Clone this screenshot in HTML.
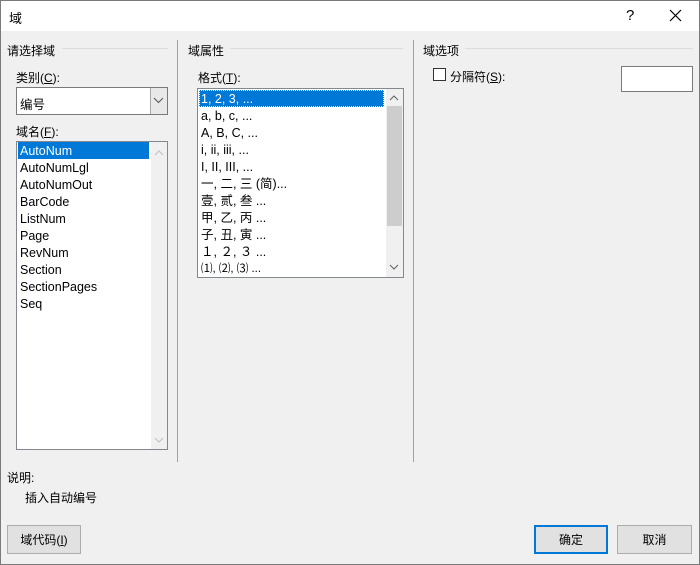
<!DOCTYPE html>
<html><head><meta charset="utf-8"><style>
*{box-sizing:border-box;margin:0;padding:0}
body{width:700px;height:565px;background:#f0f0f0;font-family:"Liberation Sans","Noto Sans CJK SC",sans-serif;font-size:12px;color:#000;position:relative;overflow:hidden}
.frame{position:absolute;left:0;top:0;width:700px;height:565px;border:1px solid #7a7a7a}
.title{position:absolute;left:1px;top:1px;width:698px;height:30px;background:#fff}
.a{position:absolute;white-space:nowrap}
.hr{position:absolute;height:1px;background:#dcdcdc}
.vr{position:absolute;width:1px;background:#a0a0a0}
.box{position:absolute;background:#fff;border:1px solid #828790}
.item{position:absolute;height:17px;line-height:18px;padding-left:2px;white-space:nowrap;font-size:12.5px}
.sel{background:#0078d7;color:#fff}
.btn{position:absolute;height:29px;background:#e1e1e1;border:1px solid #adadad;text-align:center;line-height:28px}
u{text-decoration:underline}
</style></head><body>
<div class="title"></div>
<div class="frame"></div>
<div class="a" style="left:9px;top:8px;font-size:13px">域</div>
<div class="a" style="left:626px;top:7px;font-size:15px">?</div>
<svg class="a" style="left:669px;top:9px" width="13" height="13"><path d="M1 1L12 12M12 1L1 12" stroke="#000" stroke-width="1.2"/></svg>

<div class="a" style="left:7px;top:42px">请选择域</div>
<div class="hr" style="left:62px;top:48px;width:106px"></div>
<div class="vr" style="left:177px;top:40px;height:422px"></div>
<div class="a" style="left:188px;top:42px">域属性</div>
<div class="hr" style="left:230px;top:48px;width:173px"></div>
<div class="vr" style="left:413px;top:40px;height:422px"></div>
<div class="a" style="left:423px;top:42px">域选项</div>
<div class="hr" style="left:465px;top:48px;width:228px"></div>

<div class="a" style="left:16px;top:69px">类别(<u>C</u>):</div>
<div class="box" style="left:16px;top:87px;width:152px;height:28px;border-color:#7a7a7a"></div>
<div class="a" style="left:20px;top:94px;font-size:12.5px">编号</div>
<div class="a" style="left:150px;top:88px;width:17px;height:26px;background:#e8e8e8;border-left:1px solid #aaa"></div>
<svg class="a" style="left:153px;top:97px" width="11" height="7"><path d="M1 1L5.5 5.5L10 1" stroke="#555" fill="none"/></svg>

<div class="a" style="left:16px;top:123px">域名(<u>F</u>):</div>
<div class="box" style="left:16px;top:141px;width:152px;height:309px"></div>
<div class="a" style="left:151px;top:142px;width:16px;height:307px;background:#f0f0f0"></div>
<svg class="a" style="left:154px;top:150px" width="10" height="6"><path d="M1 5L5 1L9 5" stroke="#c0c0c0" fill="none"/></svg>
<svg class="a" style="left:154px;top:437px" width="10" height="6"><path d="M1 1L5 5L9 1" stroke="#c0c0c0" fill="none"/></svg>
<div class="item sel" style="left:18px;top:142px;width:131px">AutoNum</div>
<div class="item" style="left:18px;top:159px">AutoNumLgl</div>
<div class="item" style="left:18px;top:176px">AutoNumOut</div>
<div class="item" style="left:18px;top:193px">BarCode</div>
<div class="item" style="left:18px;top:210px">ListNum</div>
<div class="item" style="left:18px;top:227px">Page</div>
<div class="item" style="left:18px;top:244px">RevNum</div>
<div class="item" style="left:18px;top:261px">Section</div>
<div class="item" style="left:18px;top:278px">SectionPages</div>
<div class="item" style="left:18px;top:295px">Seq</div>

<div class="a" style="left:198px;top:69px">格式(<u>T</u>):</div>
<div class="box" style="left:197px;top:88px;width:207px;height:190px"></div>
<div class="a" style="left:386px;top:89px;width:17px;height:188px;background:#f0f0f0"></div>
<div class="a" style="left:387px;top:106px;width:15px;height:120px;background:#cdcdcd"></div>
<svg class="a" style="left:389px;top:95px" width="10" height="6"><path d="M1 5L5 1L9 5" stroke="#606060" fill="none"/></svg>
<svg class="a" style="left:389px;top:264px" width="10" height="6"><path d="M1 1L5 5L9 1" stroke="#606060" fill="none"/></svg>
<div class="item sel" style="left:199px;top:90px;width:185px;outline:1px dotted #fff;outline-offset:-1px">1, 2, 3, ...</div>
<div class="item" style="left:199px;top:107px">a, b, c, ...</div>
<div class="item" style="left:199px;top:124px">A, B, C, ...</div>
<div class="item" style="left:199px;top:141px">i, ii, iii, ...</div>
<div class="item" style="left:199px;top:158px">I, II, III, ...</div>
<div class="item" style="left:199px;top:175px">一, 二, 三 (简)...</div>
<div class="item" style="left:199px;top:192px">壹, 贰, 叁 ...</div>
<div class="item" style="left:199px;top:209px">甲, 乙, 丙 ...</div>
<div class="item" style="left:199px;top:226px">子, 丑, 寅 ...</div>
<div class="item" style="left:199px;top:243px">１, ２, ３ ...</div>
<div class="item" style="left:199px;top:260px;font-size:11.5px">⑴, ⑵, ⑶ ...</div>

<div class="a" style="left:433px;top:68px;width:13px;height:13px;border:1px solid #333;background:#fff"></div>
<div class="a" style="left:450px;top:68px">分隔符(<u>S</u>):</div>
<div class="box" style="left:621px;top:66px;width:72px;height:26px;border-color:#7a7a7a"></div>

<div class="a" style="left:7px;top:469px">说明:</div>
<div class="a" style="left:25px;top:489px">插入自动编号</div>

<div class="btn" style="left:7px;top:525px;width:74px">域代码(<u>I</u>)</div>
<div class="btn" style="left:534px;top:525px;width:74px;border:2px solid #0078d7;line-height:26px">确定</div>
<div class="btn" style="left:617px;top:525px;width:75px">取消</div>
</body></html>
